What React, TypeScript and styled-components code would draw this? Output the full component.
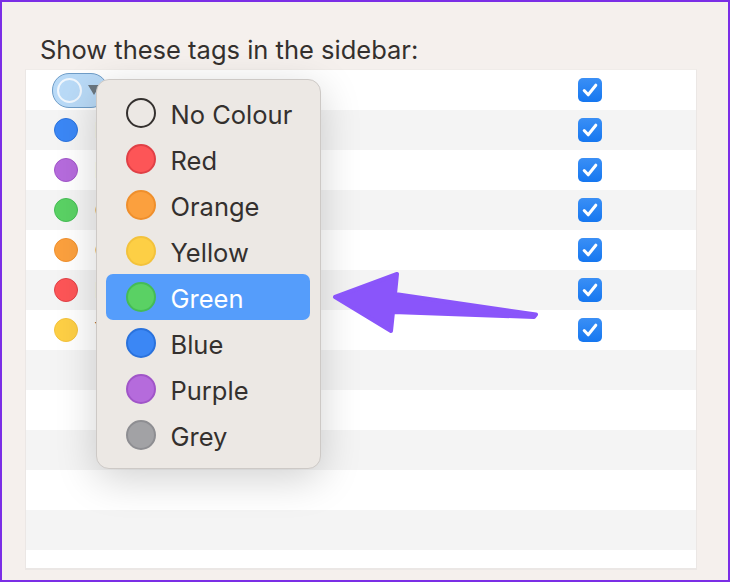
import React from "react"
import styled, { createGlobalStyle } from "styled-components"

const GlobalStyle = createGlobalStyle`
  html, body {
    margin: 0;
    padding: 0;
    background: #f5f0ed;
  }
`

const Frame = styled.div`
  position: relative;
  box-sizing: border-box;
  width: 730px;
  height: 582px;
  padding: 34px 31px 10px 23px;
  overflow: hidden;
  border: 2px solid #7b2ee6;
  background: #f5f0ed;
  font-family: Inter, "Liberation Sans", sans-serif;
`

const Title = styled.div`
  height: 33px;
  padding-left: 15px;
  font-size: 25.5px;
  line-height: 28px;
  color: #34302e;
`

const Table = styled.div`
  box-sizing: border-box;
  width: 672px;
  height: 501px;
  overflow: hidden;
  border: 1px solid #ebe7e5;
  border-bottom-width: 2px;
  border-top-color: #f0ece9;
  background: #ffffff;
`

const Row = styled.div<{ $odd: boolean }>`
  display: flex;
  align-items: center;
  height: 40px;
  padding-left: 28px;
  background: ${(p) => (p.$odd ? "#f4f4f4" : "#ffffff")};
`

const Swatch = styled.span<{ $fill: string; $edge: string }>`
  box-sizing: border-box;
  flex: none;
  width: 24px;
  height: 24px;
  border-radius: 50%;
  border: 1px solid ${(p) => p.$edge};
  background: ${(p) => p.$fill};
`

const Label = styled.span`
  margin-left: 16.5px;
  font-size: 22px;
  color: #34302e;
`

const Check = styled.span`
  display: flex;
  align-items: center;
  justify-content: center;
  flex: none;
  margin-left: auto;
  margin-right: 94px;
  width: 24px;
  height: 24px;
  border-radius: 5px;
  background: linear-gradient(#3a8ff5, #1677f0);
`

const PickerButton = styled.div`
  box-sizing: border-box;
  flex: none;
  display: flex;
  align-items: center;
  gap: 5.5px;
  width: 56px;
  height: 35px;
  margin-left: -2px;
  padding-left: 4px;
  border: 1.5px solid #6f9dc8;
  border-radius: 17px;
  background: #b9daf7;
`

const EmptyRing = styled.span`
  box-sizing: border-box;
  flex: none;
  width: 25px;
  height: 25px;
  border-radius: 50%;
  border: 2px solid #f1f7fd;
  background: #b9daf7;
`

const Caret = styled.span`
  flex: none;
  width: 0;
  height: 0;
  border-left: 6px solid transparent;
  border-right: 6px solid transparent;
  border-top: 10px solid #6b7780;
`

const Menu = styled.div`
  position: absolute;
  left: 94px;
  top: 77px;
  box-sizing: border-box;
  width: 225px;
  height: 390px;
  padding: 10px 10px 10px 9px;
  border: 1px solid #cdc9c6;
  border-radius: 13px;
  background: #ece8e4;
  box-shadow: 0 10px 40px rgba(0, 0, 0, 0.18);
`

const MenuItem = styled.div<{ $active?: boolean }>`
  display: flex;
  align-items: center;
  gap: 14.5px;
  height: 46px;
  padding-left: 20px;
  border-radius: 7px;
  font-size: 25.5px;
  color: ${(p) => (p.$active ? "#ffffff" : "#34302e")};
  background: ${(p) => (p.$active ? "#559dfb" : "transparent")};
`

const MenuText = styled.span`
  padding-top: 3px;
`

const MenuDot = styled.span<{ $fill: string; $edge: string }>`
  box-sizing: border-box;
  flex: none;
  width: 30px;
  height: 30px;
  border-radius: 50%;
  border: 2px solid ${(p) => p.$edge};
  background: ${(p) => p.$fill};
`

const Arrow = styled.svg`
  position: absolute;
  left: -2px;
  top: -2px;
  pointer-events: none;
`

const colours = {
  blue: { fill: "#3b87f5", edge: "#2a72dc" },
  purple: { fill: "#b56bdc", edge: "#a055c8" },
  green: { fill: "#5ad164", edge: "#45bc55" },
  orange: { fill: "#fba03e", edge: "#ef8f2c" },
  red: { fill: "#fd5557", edge: "#e04046" },
  yellow: { fill: "#fdcf45", edge: "#f3c23c" },
  grey: { fill: "#a2a2a5", edge: "#8e8e92" },
}

const rows = [
  { c: colours.blue, name: "Blue" },
  { c: colours.purple, name: "Purple" },
  { c: colours.green, name: "Green" },
  { c: colours.orange, name: "Orange" },
  { c: colours.red, name: "Red" },
  { c: colours.yellow, name: "Yellow" },
]

const menuItems = [
  { name: "Red", c: colours.red },
  { name: "Orange", c: colours.orange },
  { name: "Yellow", c: colours.yellow },
  { name: "Green", c: colours.green, active: true },
  { name: "Blue", c: colours.blue },
  { name: "Purple", c: colours.purple },
  { name: "Grey", c: colours.grey },
]

const Tick = () => (
  <svg width="16" height="14" viewBox="0 0 16 14">
    <path
      d="M2.2 7.5 L6.2 11.8 L13.8 2.2"
      fill="none"
      stroke="#ffffff"
      strokeWidth="3"
      strokeLinecap="round"
      strokeLinejoin="round"
    />
  </svg>
)

const App = () => (
  <>
    <GlobalStyle />
    <Frame>
      <Title>Show these tags in the sidebar:</Title>
      <Table>
        <Row $odd={false}>
          <PickerButton>
            <EmptyRing />
            <Caret />
          </PickerButton>
          <Check>
            <Tick />
          </Check>
        </Row>
        {rows.map((r, i) => (
          <Row key={r.name} $odd={i % 2 === 0}>
            <Swatch $fill={r.c.fill} $edge={r.c.edge} />
            <Label>{r.name}</Label>
            <Check>
              <Tick />
            </Check>
          </Row>
        ))}
        {[0, 1, 2, 3, 4, 5].map((i) => (
          <Row key={i} $odd={i % 2 === 0} />
        ))}
      </Table>
      <Menu>
        <MenuItem>
          <MenuDot $fill="transparent" $edge="#34302e" />
          <MenuText>No Colour</MenuText>
        </MenuItem>
        {menuItems.map((m) => (
          <MenuItem key={m.name} $active={m.active}>
            <MenuDot $fill={m.c.fill} $edge={m.c.edge} />
            <MenuText>{m.name}</MenuText>
          </MenuItem>
        ))}
      </Menu>
      <Arrow width="730" height="582" viewBox="0 0 730 582">
        <path
          d="M335 297 L397 274 L395 294 L536 314.5 L534 317 L393 312 L391 331 Z"
          fill="#8a55fa"
          stroke="#8a55fa"
          strokeWidth="4"
          strokeLinejoin="round"
        />
      </Arrow>
    </Frame>
  </>
)

export default App
